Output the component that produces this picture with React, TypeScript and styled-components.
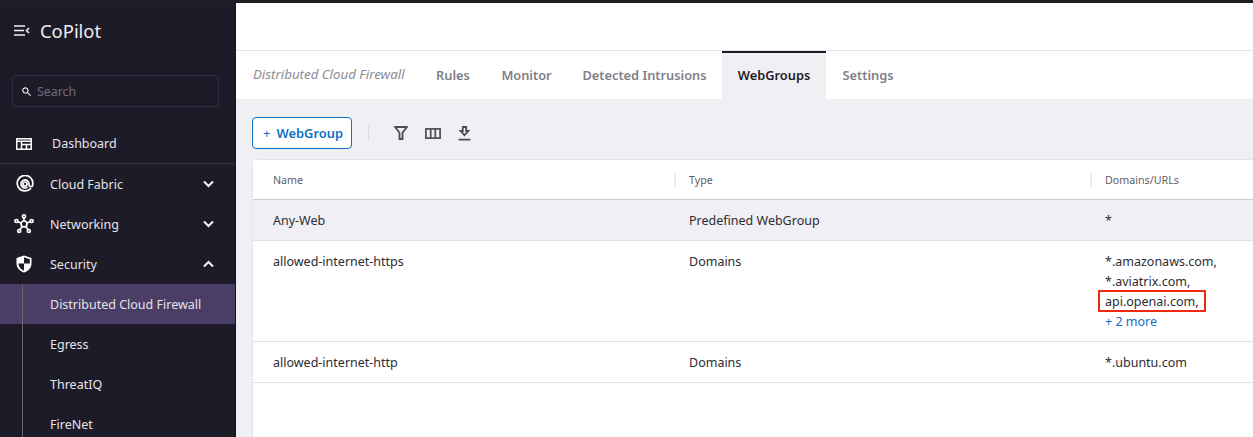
import React from "react";
import styled, { createGlobalStyle } from "styled-components";

const Global = createGlobalStyle`
  html, body { margin: 0; padding: 0; height: 100%; overflow: hidden; background: #fff; }
  * { box-sizing: border-box; }
  body { font-family: "Noto Sans", "Open Sans", sans-serif; font-size: 13px; }
`;

const Page = styled.div`
  width: 1253px; height: 437px; display: flex; overflow: hidden;
  border-top: 3px solid #1f1e24;
`;
const Sidebar = styled.aside`
  width: 236px; flex: none; background: #1e1b29; color: #e4e3e8; display: flex; flex-direction: column; overflow: hidden;
  border-right: 1px solid #15131d;
`;
const Brand = styled.div`
  height: 54px; flex: none; display: flex; align-items: center; gap: 10px; padding: 0 0 0 14px;
  font-size: 18.4px; color: #eeedf1;
`;
const SearchBox = styled.div`
  margin: 18px 0 17px 12px; width: 207px; height: 32px; flex: none; border: 1px solid #322e45; border-radius: 4px;
  display: flex; align-items: center; gap: 6px; padding-left: 9px; color: #6e6b7b; font-size: 12.4px;
`;
const NavRow = styled.div<{ $active?: boolean; $pad?: number; $line?: boolean }>`
  height: 40px; flex: none; display: flex; align-items: center; position: relative;
  padding-left: ${p => p.$pad ?? 50}px; padding-right: 21px; font-size: 12.5px; color: #e4e3e8;
  background: ${p => (p.$active ? "#4a3d66" : "transparent")};
  border-bottom: ${p => (p.$line ? "1px solid #373445" : "none")};
`;
const SubLine = styled.span`
  position: absolute; left: 22px; top: 0; bottom: 0; width: 1px; background: #6a6775;
`;
const NavIcon = styled.span<{ $left?: number }>`
  position: absolute; left: ${p => p.$left ?? 14}px; top: 50%; transform: translateY(-50%); display: flex; color: #fff;
`;
const Chevron = styled.svg`
  margin-left: auto;
`;
const Main = styled.main`
  flex: 1; min-width: 0; display: flex; flex-direction: column; background: #efeff4;
`;
const TopBlank = styled.div`
  height: 48px; flex: none; background: #fff; border-bottom: 1px solid #e3e3e6;
`;
const Tabs = styled.nav`
  height: 48px; flex: none; background: #fff; display: flex; align-items: stretch; padding-left: 17px;
`;
const Crumb = styled.div`
  display: flex; align-items: center; font-style: italic; font-size: 13.3px; color: #8c8b94; width: 167px; white-space: nowrap; padding-bottom: 2px;
`;
const Tab = styled.div<{ $active?: boolean; $w: number }>`
  display: flex; align-items: center; justify-content: center; width: ${p => p.$w}px;
  font-weight: 600; font-size: 12.8px; padding-bottom: 3px;
  color: ${p => (p.$active ? "#1e1b29" : "#807f88")};
  background: ${p => (p.$active ? "#efeff4" : "#fff")};
  border-top: 2px solid ${p => (p.$active ? "#1e1b29" : "#fff")};
`;
const Toolbar = styled.div`
  height: 60px; flex: none; display: flex; align-items: center; padding: 8px 0 0 16px;
`;
const AddButton = styled.button`
  width: 100px; height: 32px; border: 1px solid #0f6fc6; border-radius: 4px; background: #fff; color: #0f6fc6;
  font: 600 12.9px "Noto Sans", sans-serif; display: flex; align-items: center; justify-content: center; gap: 6px; padding: 0 0 0 2px;
`;
const Plus = styled.span`
  font-weight: 400;
`;
const Divider = styled.span`
  width: 1px; height: 16px; background: #dcdce2; margin: 0 25px 0 16px;
`;
const ToolIcons = styled.div`
  display: flex; align-items: center; gap: 17px; color: #4d4c55;
`;
const Card = styled.section`
  flex: 1; margin-left: 16px; background: #fff; border: 1px solid #e3e3e8; border-right: 0; border-bottom: 0;
  border-radius: 6px 0 0 0; display: flex; flex-direction: column;
`;
const Row = styled.div<{ $h: number; $shade?: boolean; $head?: boolean }>`
  height: ${p => p.$h}px; flex: none; display: grid; grid-template-columns: 422px 416px 1fr; align-items: start;
  background: ${p => (p.$shade ? "#efeff4" : "#fff")};
  border-bottom: 1px solid ${p => (p.$head ? "#c9c9d3" : "#e1e1e5")};
  color: ${p => (p.$head ? "#5f5e67" : "#2d2c33")};
  font-size: ${p => (p.$head ? "10.7px" : "12.5px")};
  padding-top: ${p => (p.$head ? 0 : 1)}px;
`;
const Cell = styled.div<{ $first?: boolean }>`
  padding: 10px 0 0 ${p => (p.$first ? 20 : 14)}px;
  line-height: 20px; position: relative;
`;
const Resizer = styled.span`
  position: absolute; left: -1px; top: 14px; width: 2px; height: 12px; background: #ececef;
`;
const Line = styled.div`
  height: 20px; white-space: nowrap;
  position: relative;
`;
const RedBox = styled.span`
  position: absolute; left: -7px; top: -2px; width: 108px; height: 22px; border: 2px solid #f02a10;
`;
const More = styled.div`
  height: 20px; color: #0f6fc6;
`;

const ChevronIcon = ({ up }: { up?: boolean }) => (
  <Chevron width="11" height="8" viewBox="0 0 11 8" fill="none" stroke="#f2f1f5" strokeWidth="2">
    <path d={up ? "M1 6.500 5.500 2 10 6.500" : "M1 1.500 5.500 6 10 1.500"} />
  </Chevron>
);

const Columns = ["Name", "Type", "Domains/URLs"];

export default function App() {
  return (
    <Page>
      <Global />
      <Sidebar>
        <Brand>
          <svg width="16" height="11" viewBox="0 0 16 11" fill="none" stroke="#f2f1f5" strokeWidth="1.6">
            <path d="M0 1h11M0 5.500h10M0 10h11M15 3 12.500 5.500 15 8" />
          </svg>
          CoPilot
        </Brand>
        <SearchBox>
          <svg width="9" height="9" viewBox="0 0 9 9" fill="none" stroke="#e4e3e8" strokeWidth="1.2">
            <circle cx="3.400" cy="3.400" r="2.600" />
            <path d="M5.300 5.300 8.600 8.600" />
          </svg>
          Search
        </SearchBox>
        <NavRow $pad={52} $line>
          <NavIcon $left={16}>
            <svg width="16" height="12" viewBox="0 0 16 12" fill="none" stroke="#fff" strokeWidth="1.500">
              <rect x="0.800" y="0.800" width="14.400" height="10.400" />
              <path d="M1 3.200h14M5.500 3.200V11M5.500 6.500h10M10.500 6.500V11" />
            </svg>
          </NavIcon>
          Dashboard
        </NavRow>
        <NavRow>
          <NavIcon $left={16}>
            <svg width="18" height="18" viewBox="0 0 18 18" fill="none" stroke="#fff" strokeWidth="1.700">
              <circle cx="9" cy="9" r="2" />
              <path d="M15 13.200A7.800 7.800 0 1 1 16.800 9c0 1.800-1 2.700-2 2.700S13 10.800 13 9.500V9a4 4 0 1 0-1.500 3.100" />
            </svg>
          </NavIcon>
          Cloud Fabric
          <ChevronIcon />
        </NavRow>
        <NavRow>
          <NavIcon $left={14}>
            <svg width="20" height="20" viewBox="0 0 20 20" fill="none" stroke="#fff" strokeWidth="1.700">
              <circle cx="10" cy="10" r="3" />
              <circle cx="10" cy="2.400" r="1.500" />
              <circle cx="2.400" cy="7" r="1.500" />
              <circle cx="17.600" cy="7" r="1.500" />
              <circle cx="5.200" cy="17" r="1.500" />
              <circle cx="14.800" cy="17" r="1.500" />
              <path d="M10 4v3M3.800 7.800l3.500 1.200M16.200 7.800 12.700 9M6 15.600l2.300-3M14 15.600l-2.300-3" />
            </svg>
          </NavIcon>
          Networking
          <ChevronIcon />
        </NavRow>
        <NavRow>
          <NavIcon $left={16}>
            <svg width="16" height="18" viewBox="0 0 16 18">
              <path fill="#fff" d="M8 .5 15.500 3v5.500c0 4.200-3 7.600-7.500 9C3.500 16.100.5 12.700.5 8.500V3z" />
              <path fill="#1e1b29" d="M8 2.300 13.800 4.300V8.500H8zM8 8.500H2.300C2.700 11.800 5 14.500 8 15.700z" />
            </svg>
          </NavIcon>
          Security
          <ChevronIcon up />
        </NavRow>
        <NavRow $active>
          <SubLine />
          Distributed Cloud Firewall
        </NavRow>
        <NavRow>
          <SubLine />
          Egress
        </NavRow>
        <NavRow>
          <SubLine />
          ThreatIQ
        </NavRow>
        <NavRow>
          <SubLine />
          FireNet
        </NavRow>
      </Sidebar>
      <Main>
        <TopBlank />
        <Tabs>
          <Crumb>Distributed Cloud Firewall</Crumb>
          <Tab $w={66}>Rules</Tab>
          <Tab $w={81}>Monitor</Tab>
          <Tab $w={155}>Detected Intrusions</Tab>
          <Tab $w={104} $active>WebGroups</Tab>
          <Tab $w={84}>Settings</Tab>
        </Tabs>
        <Toolbar>
          <AddButton><Plus>+</Plus>WebGroup</AddButton>
          <Divider />
          <ToolIcons>
            <svg width="14" height="14" viewBox="0 0 14 14" fill="none" stroke="currentColor" strokeWidth="1.800">
              <path d="M1.200 1h11.600L8.500 6.800v6.200h-3V6.800z" />
            </svg>
            <svg width="16" height="11" viewBox="0 0 16 11" fill="none" stroke="currentColor" strokeWidth="1.700">
              <rect x="0.900" y="0.900" width="14.200" height="9.200" />
              <path d="M5.700 1v9M10.300 1v9" />
            </svg>
            <svg width="13" height="15" viewBox="0 0 13 15" fill="none" stroke="currentColor" strokeWidth="1.800">
              <path d="M4.800 1h3.400v4h2.200L6.500 9.200 2.600 5h2.200zM0.500 13.600h12" />
            </svg>
          </ToolIcons>
        </Toolbar>
        <Card>
          <Row $h={40} $head>
            {Columns.map((c, i) => (
              <Cell key={c} $first={i === 0}>
                {i > 0 && <Resizer />}
                {c}
              </Cell>
            ))}
          </Row>
          <Row $h={41} $shade>
            <Cell $first>Any-Web</Cell>
            <Cell>Predefined WebGroup</Cell>
            <Cell>*</Cell>
          </Row>
          <Row $h={101}>
            <Cell $first>allowed-internet-https</Cell>
            <Cell>Domains</Cell>
            <Cell>
              <Line>*.amazonaws.com,</Line>
              <Line>*.aviatrix.com,</Line>
              <Line>api.openai.com,<RedBox /></Line>
              <More>+ 2 more</More>
            </Cell>
          </Row>
          <Row $h={41}>
            <Cell $first>allowed-internet-http</Cell>
            <Cell>Domains</Cell>
            <Cell>*.ubuntu.com</Cell>
          </Row>
        </Card>
      </Main>
    </Page>
  );
}
